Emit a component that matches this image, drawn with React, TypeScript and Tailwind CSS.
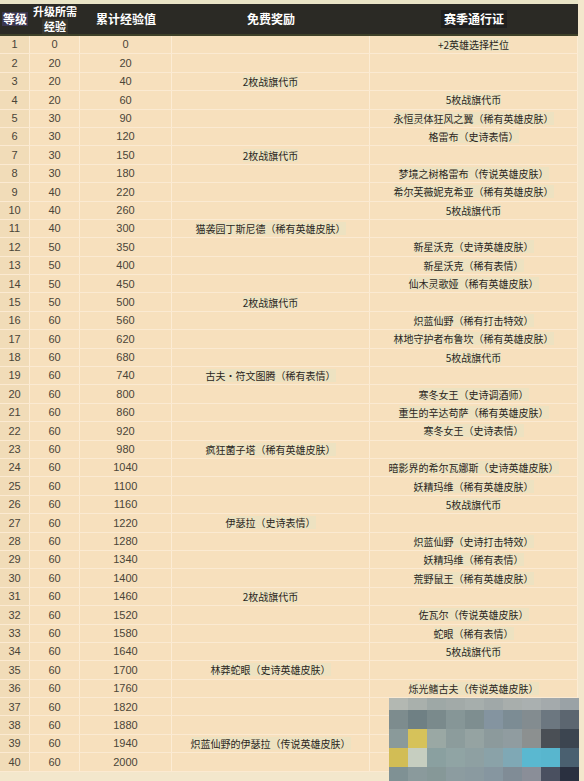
import React from 'react'

type Row = [number, number, number, string, string]

const rows: Row[] = [
  [1, 0, 0, '', '+2英雄选择栏位'],
  [2, 20, 20, '', ''],
  [3, 20, 40, '2枚战旗代币', ''],
  [4, 20, 60, '', '5枚战旗代币'],
  [5, 30, 90, '', '永恒灵体狂风之翼（稀有英雄皮肤）'],
  [6, 30, 120, '', '格雷布（史诗表情）'],
  [7, 30, 150, '2枚战旗代币', ''],
  [8, 30, 180, '', '梦境之树格雷布（传说英雄皮肤）'],
  [9, 40, 220, '', '希尔芙薇妮克希亚（稀有英雄皮肤）'],
  [10, 40, 260, '', '5枚战旗代币'],
  [11, 40, 300, '猫袭园丁斯尼德（稀有英雄皮肤）', ''],
  [12, 50, 350, '', '新星沃克（史诗英雄皮肤）'],
  [13, 50, 400, '', '新星沃克（稀有表情）'],
  [14, 50, 450, '', '仙木灵歌娅（稀有英雄皮肤）'],
  [15, 50, 500, '2枚战旗代币', ''],
  [16, 60, 560, '', '炽蓝仙野（稀有打击特效）'],
  [17, 60, 620, '', '林地守护者布鲁坎（稀有英雄皮肤）'],
  [18, 60, 680, '', '5枚战旗代币'],
  [19, 60, 740, '古夫·符文图腾（稀有表情）', ''],
  [20, 60, 800, '', '寒冬女王（史诗调酒师）'],
  [21, 60, 860, '', '重生的辛达苟萨（稀有英雄皮肤）'],
  [22, 60, 920, '', '寒冬女王（史诗表情）'],
  [23, 60, 980, '疯狂菌子塔（稀有英雄皮肤）', ''],
  [24, 60, 1040, '', '暗影界的希尔瓦娜斯（史诗英雄皮肤）'],
  [25, 60, 1100, '', '妖精玛维（稀有英雄皮肤）'],
  [26, 60, 1160, '', '5枚战旗代币'],
  [27, 60, 1220, '伊瑟拉（史诗表情）', ''],
  [28, 60, 1280, '', '炽蓝仙野（史诗打击特效）'],
  [29, 60, 1340, '', '妖精玛维（稀有表情）'],
  [30, 60, 1400, '', '荒野鼠王（稀有英雄皮肤）'],
  [31, 60, 1460, '2枚战旗代币', ''],
  [32, 60, 1520, '', '佐瓦尔（传说英雄皮肤）'],
  [33, 60, 1580, '', '蛇眼（稀有表情）'],
  [34, 60, 1640, '', '5枚战旗代币'],
  [35, 60, 1700, '林莽蛇眼（史诗英雄皮肤）', ''],
  [36, 60, 1760, '', '烁光鳍古夫（传说英雄皮肤）'],
  [37, 60, 1820, '', ''],
  [38, 60, 1880, '', ''],
  [39, 60, 1940, '炽蓝仙野的伊瑟拉（传说英雄皮肤）', ''],
  [40, 60, 2000, '', '']
]

// blurred watermark in the bottom-right corner
const mosaic: string[][] = [
  ['#b3b8b2', '#a9b0ac', '#9ea8a6', '#a2aaa8', '#a6aeac', '#a0a8a8', '#a8aeac', '#aab0b0', '#a4aaac', '#9aa2a6'],
  ['#7d8c8e', '#6f8084', '#7a8a8c', '#869697', '#7e8e90', '#8494a0', '#7c8c94', '#838c90', '#6c7780', '#5c6670'],
  ['#8a9a9a', '#d6c25a', '#9aa8a4', '#8c9c9c', '#95a3a2', '#8c9a9c', '#909ca0', '#8c9090', '#4a4f55', '#3c4550'],
  ['#d2bd55', '#c6cec0', '#8aa0a0', '#90a4a4', '#8ea0a2', '#8aa2a8', '#7fa8b5', '#5ab8d0', '#58b6ce', '#4a6070'],
  ['#7f9194', '#8a9a9c', '#869898', '#8c9ca0', '#8a9aa0', '#8696a0', '#808c96', '#8a8e98', '#4a5060', '#2a3040']
]

const cell = 'flex items-center justify-center border-r border-[#fcecd4]'

export default function App() {
  return (
    <div className="relative w-[584px] h-[781px] bg-[#f3e7cc] overflow-hidden font-['Liberation_Sans','Noto_Sans_CJK_SC',sans-serif]">
      <div className="w-[578px] pt-[4px] bg-[#e9e4c6]">
        {/* header */}
        <div className="grid grid-cols-[30px_50px_92px_198px_208px] h-[32px] bg-[#2b2a25] border-b-2 border-[#3e4129] text-white font-bold text-[12px] leading-[14px] font-['Noto_Sans_CJK_SC',sans-serif]">
          <div className="flex items-center justify-center">
            <span className="bg-[#3a3650] px-[1px]">等级</span>
          </div>
          <div className="flex flex-col items-center justify-center text-[11px] leading-[15px]">
            <span>升级所需</span>
            <span className="bg-[#38362e] px-[2px]">经验</span>
          </div>
          <div className="flex items-center justify-center">
            <span>累计经验值</span>
          </div>
          <div className="flex items-center justify-center">
            <span>免费奖励</span>
          </div>
          <div className="flex items-center justify-center">
            <span className="bg-[#1f1f1f] px-[3px] py-[2px]">赛季通行证</span>
          </div>
        </div>

        {/* rows */}
        {rows.map(([lv, need, total, free, pass]) => (
          <div
            key={lv}
            className="grid grid-cols-[30px_50px_92px_198px_208px] h-[18.4px] bg-[#f7e0bd] border-b border-[#fbead2] text-[11px] text-[#4a4538]"
          >
            <div className={`${cell} bg-[#f1dcb8]`}>{lv}</div>
            <div className={cell}>{need}</div>
            <div className={cell}>{total}</div>
            <div className={`${cell} text-[10px] text-[#2a2620] font-['Noto_Sans_CJK_SC',sans-serif]`}>
              {free && <span className="bg-[#ede2c1] leading-[13px]">{free}</span>}
            </div>
            <div className={`${cell} text-[10px] text-[#2a2620] font-['Noto_Sans_CJK_SC',sans-serif]`}>
              {pass && <span className="bg-[#ede2c1] leading-[13px]">{pass}</span>}
            </div>
          </div>
        ))}
      </div>

      <div className="absolute left-[389px] top-[698px] flex flex-col">
        {mosaic.map((line, i) => (
          <div key={i} className={`flex ${i === 0 ? 'h-[12px]' : 'h-[19px]'}`}>
            {line.map((c, j) => (
              <div key={j} className="w-[19px] h-full" style={{ backgroundColor: c }} />
            ))}
          </div>
        ))}
      </div>
    </div>
  )
}
